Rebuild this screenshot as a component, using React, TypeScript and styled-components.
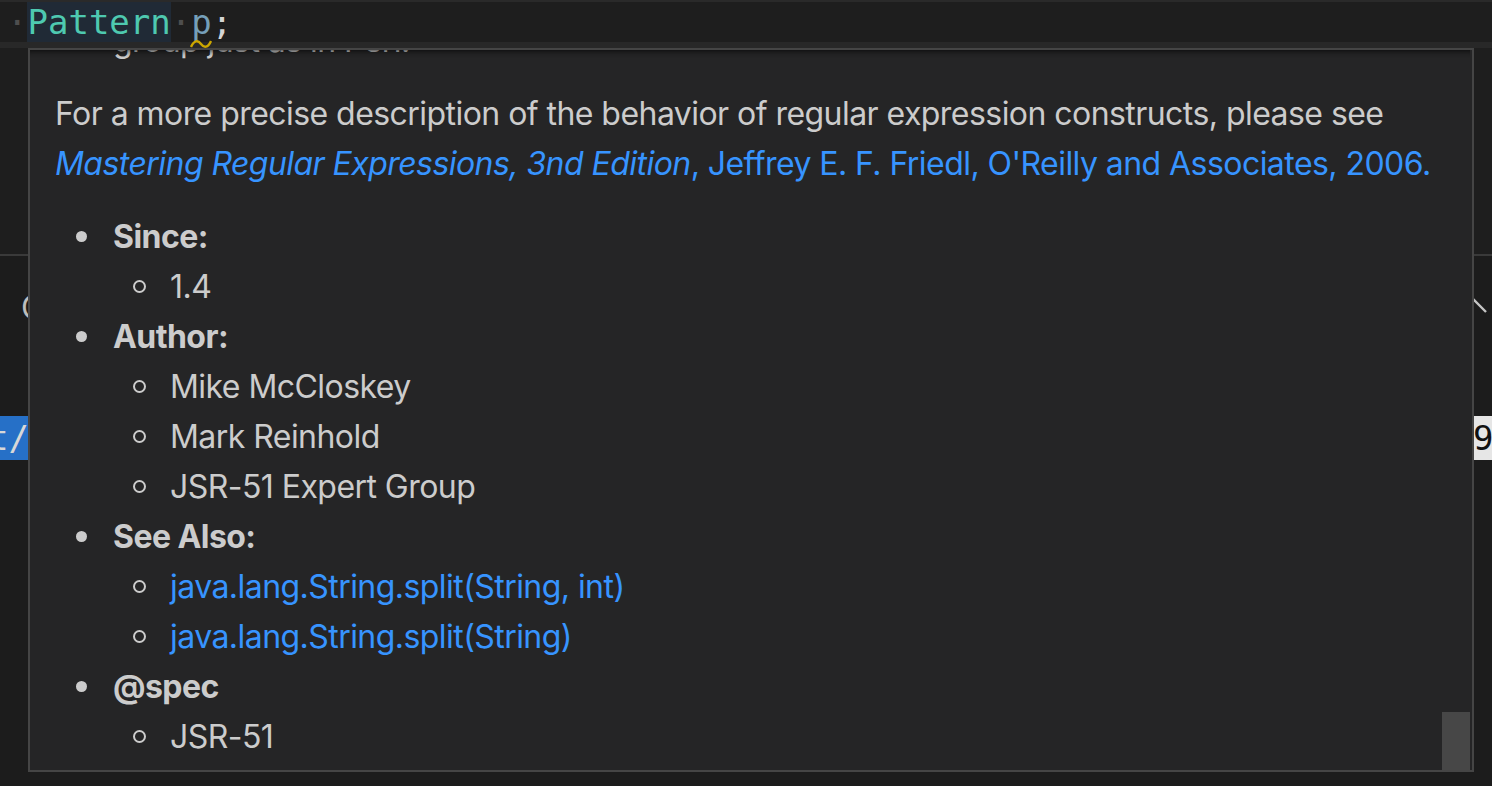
import React from "react";
import styled, { createGlobalStyle } from "styled-components";

const GlobalStyle = createGlobalStyle`
  html, body {
    margin: 0;
    padding: 0;
    background: #1e1e1e;
    overflow: hidden;
  }
`;

const mono = `"DejaVu Sans Mono", "Liberation Mono", monospace`;
const sans = `Inter, "Noto Sans", "Liberation Sans", sans-serif`;

const App: React.FC = () => {
  return (
    <Workbench>
      <GlobalStyle />
      <Editor>
        <TopEdge />
        <CodeLine>
          <Ws>·</Ws>
          <TypeToken>Pattern</TypeToken>
          <Ws>·</Ws>
          <VarToken>
            p
            <Squiggle width="22" height="10" viewBox="0 0 22 10">
              <path
                d="M1 8 C4 1, 8 1, 11 5 S18 9, 21 2"
                fill="none"
                stroke="#cca700"
                strokeWidth="2.4"
              />
            </Squiggle>
          </VarToken>
          <Punct>;</Punct>
        </CodeLine>
        <LineBand />
      </Editor>
      <Panel>
        <PanelHeader>
          <PanelTitle>CONSOLE</PanelTitle>
          <svg width="28" height="24" viewBox="0 0 28 24">
            <polyline
              points="2,17 14,5 26,17"
              fill="none"
              stroke="#c5c5c5"
              strokeWidth="2.4"
            />
          </svg>
        </PanelHeader>
        <TerminalRow>
          <Selection>t/java/util/regex/Pattern.java</Selection>
          <CursorBlock>9</CursorBlock>
        </TerminalRow>
      </Panel>

      <Hover>
        <ScrollShadow />
        <HoverBody>
          <TagList $cut>
            <Item>group just as in Perl.</Item>
          </TagList>
          <Para>
            For a more precise description of the behavior of regular
            expression constructs, please see
            <br />
            <Link>
              <em>Mastering Regular Expressions, 3nd Edition</em>, Jeffrey E. F.
              Friedl, O'Reilly and Associates, 2006.
            </Link>
          </Para>
          <TagList>
            <Item>
              <strong>Since:</strong>
              <SubList>
                <SubItem>1.4</SubItem>
              </SubList>
            </Item>
            <Item>
              <strong>Author:</strong>
              <SubList>
                <SubItem>Mike McCloskey</SubItem>
                <SubItem>Mark Reinhold</SubItem>
                <SubItem>JSR-51 Expert Group</SubItem>
              </SubList>
            </Item>
            <Item>
              <strong>See Also:</strong>
              <SubList>
                <SubItem>
                  <Link>java.lang.String.split(String, int)</Link>
                </SubItem>
                <SubItem>
                  <Link>java.lang.String.split(String)</Link>
                </SubItem>
              </SubList>
            </Item>
            <Item>
              <strong>@spec</strong>
              <SubList>
                <SubItem>JSR-51</SubItem>
              </SubList>
            </Item>
          </TagList>
        </HoverBody>
        <ScrollThumb />
      </Hover>
    </Workbench>
  );
};

const Workbench = styled.div`
  position: relative;
  width: 100vw;
  height: 100vh;
  background: #1e1e1e;
  display: flex;
  flex-direction: column;
  overflow: hidden;
`;

const Editor = styled.div`
  height: 254px;
  background: #1e1e1e;
  border-bottom: 2px solid #3a3a3a;
  flex-shrink: 0;
`;

const TopEdge = styled.div`
  height: 2px;
  background: #2a2a2a;
`;

const CodeLine = styled.div`
  height: 40px;
  display: flex;
  align-items: center;
  padding-left: 7px;
  font-family: ${mono};
  font-size: 34px;
  line-height: 40px;
  white-space: pre;
`;

const Ws = styled.span`
  color: #4e4e4e;
`;

const TypeToken = styled.span`
  color: #4ec9b0;
  background: #202a36;
`;

const VarToken = styled.span`
  position: relative;
  color: #759fb9;
`;

const Punct = styled.span`
  color: #d4d4d4;
`;

const Squiggle = styled.svg`
  position: absolute;
  left: -1px;
  top: 37px;
`;

const LineBand = styled.div`
  height: 6px;
  background: #282828;
`;

const Panel = styled.div`
  flex: 1;
  background: #1c1c1c;
`;

const PanelHeader = styled.div`
  height: 102px;
  display: flex;
  align-items: center;
  justify-content: space-between;
  padding: 0 4px 0 21px;
`;

const PanelTitle = styled.span`
  font-family: ${sans};
  font-size: 32px;
  color: #bdbdbd;
`;

const TerminalRow = styled.div`
  margin-top: 58px;
  height: 44px;
  display: flex;
  justify-content: space-between;
  font-family: ${mono};
  font-size: 34px;
  line-height: 44px;
  white-space: pre;
  overflow: hidden;
`;

const Selection = styled.span`
  background: #2670c7;
  color: #d8d8d8;
  margin-left: -12px;
`;

const CursorBlock = styled.span`
  width: 18px;
  background: #e6e6e6;
  color: #111;
  overflow: hidden;
  text-indent: -1px;
`;

const Hover = styled.div`
  position: absolute;
  left: 28px;
  top: 48px;
  width: 1446px;
  height: 724px;
  box-sizing: border-box;
  border: 2px solid #454545;
  background: #252526;
  overflow: hidden;
  color: #cccccc;
  font-family: ${sans};
  font-size: 32px;
  letter-spacing: -0.55px;
  line-height: 50px;
`;

const ScrollShadow = styled.div`
  position: absolute;
  top: 0;
  left: 0;
  right: 2px;
  height: 8px;
  box-shadow: #000 0 7px 7px -7px inset;
  z-index: 2;
`;

const HoverBody = styled.div`
  padding: 0 25px 8px;
  white-space: nowrap;
`;

const Para = styled.p`
  margin: 23px 0 0;
`;

const Link = styled.span`
  color: #3794ff;
`;

const TagList = styled.ul<{ $cut?: boolean }>`
  margin: ${(p) => (p.$cut ? "-34px 0 0" : "23px 0 0")};
  padding-left: 58px;
  list-style: none;

  strong {
    font-weight: 700;
  }
`;

const Item = styled.li`
  position: relative;

  &::before {
    content: "";
    position: absolute;
    left: -37px;
    top: 19px;
    width: 11px;
    height: 11px;
    border-radius: 50%;
    background: #cccccc;
  }
`;

const SubList = styled.ul`
  margin: 0;
  padding-left: 57px;
  list-style: none;
`;

const SubItem = styled.li`
  position: relative;

  &::before {
    content: "";
    position: absolute;
    left: -37px;
    top: 18px;
    width: 9px;
    height: 9px;
    border-radius: 50%;
    border: 2px solid #cccccc;
  }
`;

const ScrollThumb = styled.div`
  position: absolute;
  right: 2px;
  bottom: 0;
  width: 28px;
  height: 58px;
  background: #474747;
`;

export default App;
